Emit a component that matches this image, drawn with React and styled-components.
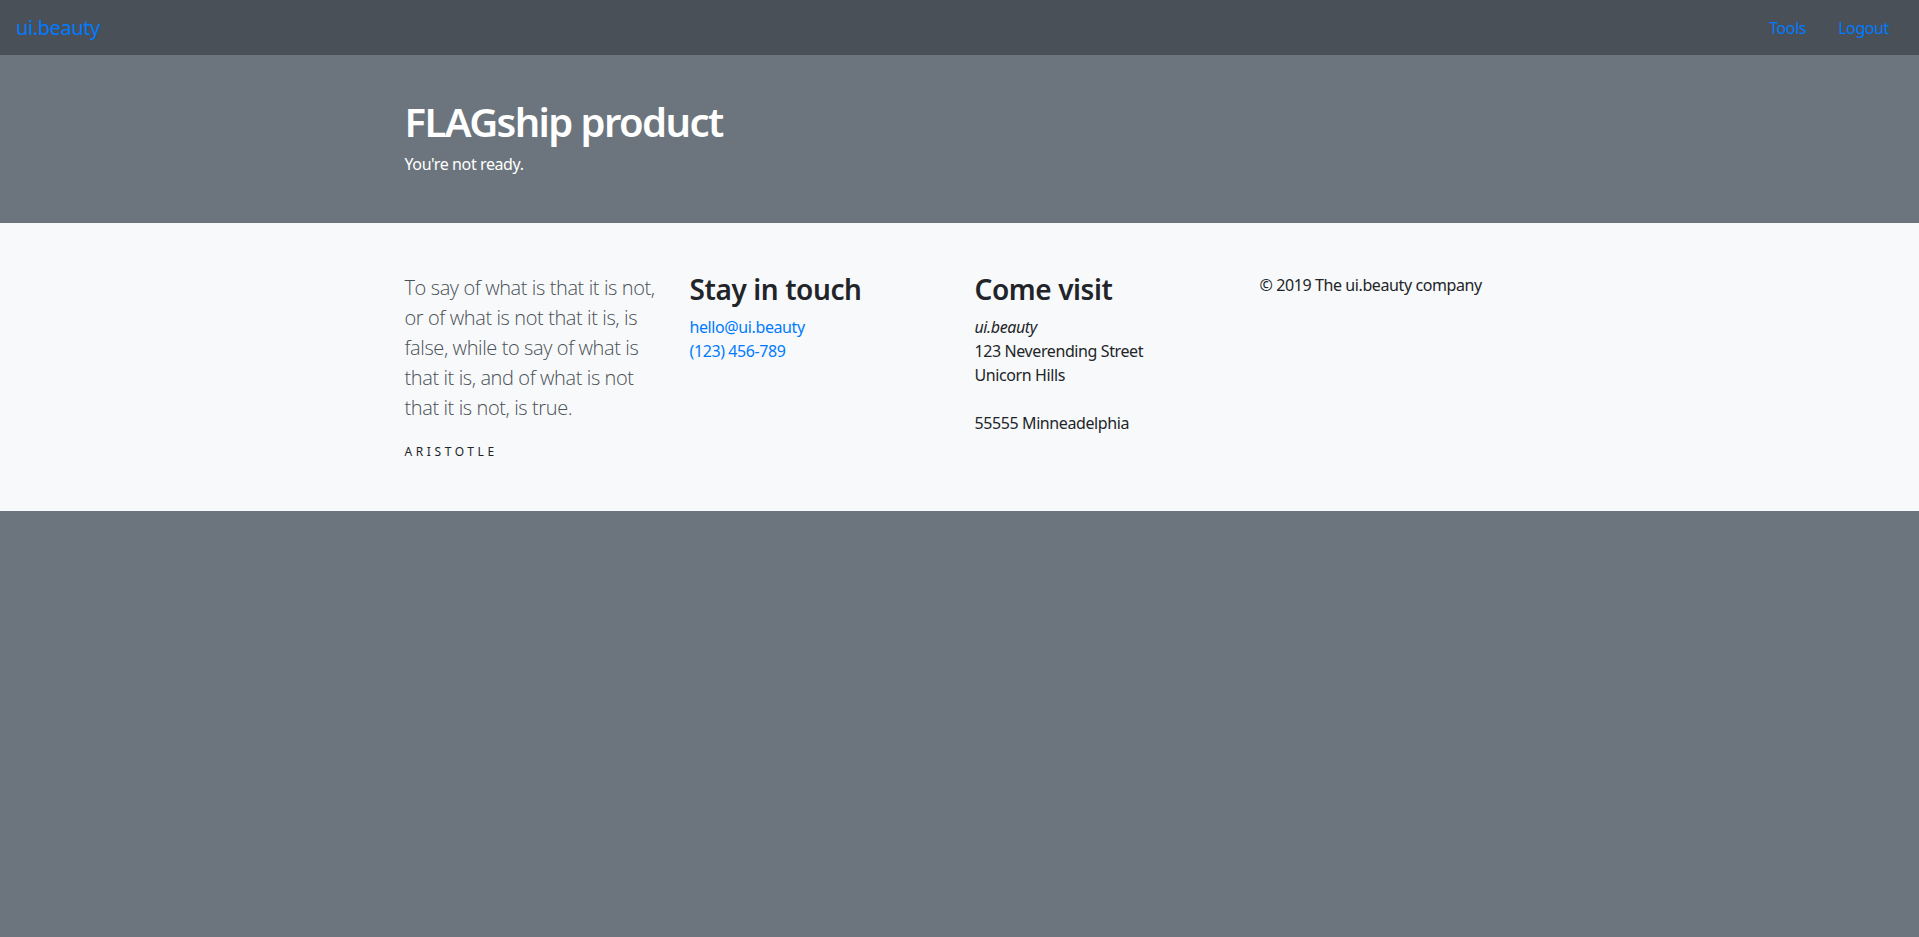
import styled, { createGlobalStyle } from "styled-components";

const GlobalStyle = createGlobalStyle`
  * { box-sizing: border-box; }
  html, body {
    margin: 0;
    padding: 0;
    background-color: #6c757d;
    font-family: "Noto Sans", "Open Sans", "Liberation Sans", sans-serif;
    font-size: 16px;
    line-height: 1.5;
    letter-spacing: -0.025em;
    color: #212529;
  }
`;

export default function App() {
  return (
    <>
      <GlobalStyle />
      <Navbar>
        <Brand href="#">ui.beauty</Brand>
        <NavLinks>
          <NavLink href="#">Tools</NavLink>
          <NavLink href="#">Logout</NavLink>
        </NavLinks>
      </Navbar>
      <Jumbotron>
        <Container>
          <h1>FLAGship product</h1>
          <p>You're not ready.</p>
        </Container>
      </Jumbotron>
      <Footer>
        <Container>
          <Row>
            <Col>
              <Quote>
                To say of what is that it is not, or of what is not that it is,
                is false, while to say of what is that it is, and of what is not
                that it is not, is true.
              </Quote>
              <Author>Aristotle</Author>
            </Col>
            <Col>
              <Heading>Stay in touch</Heading>
              <ContactLink href="#">hello@ui.beauty</ContactLink>
              <ContactLink href="#">(123) 456-789</ContactLink>
            </Col>
            <Col>
              <Heading>Come visit</Heading>
              <Address>
                <em>ui.beauty</em>
                <br />
                123 Neverending Street
                <br />
                Unicorn Hills
                <br />
                <br />
                55555 Minneadelphia
              </Address>
            </Col>
            <Col>
              <Copy>© 2019 The ui.beauty company</Copy>
            </Col>
          </Row>
        </Container>
      </Footer>
    </>
  );
}

const Navbar = styled.nav`
  height: 55px;
  background-color: #495057;
  display: flex;
  align-items: center;
  justify-content: space-between;
  padding: 0 22px 0 16px;
`;

const Brand = styled.a`
  color: #007bff;
  font-size: 20px;
  text-decoration: none;
`;

const NavLinks = styled.div`
  display: flex;
`;

const NavLink = styled.a`
  color: #007bff;
  text-decoration: none;
  padding: 0 8px;
  margin-left: 16px;
`;

const Jumbotron = styled.header`
  background-color: #6c757d;
  color: #fff;
  padding: 43px 0 47px;

  h1 {
    margin: 0 0 6px;
    font-size: 40px;
    font-weight: 600;
    line-height: 1.2;
    letter-spacing: -0.04em;
  }

  p {
    margin: 0;
  }
`;

const Container = styled.div`
  width: 1140px;
  margin: 0 auto;
  padding: 0 15px;
`;

const Footer = styled.footer`
  background-color: #f8f9fa;
  padding: 50px 0 50px;
`;

const Row = styled.div`
  display: grid;
  grid-template-columns: repeat(4, 1fr);
  margin: 0 -15px;
`;

const Col = styled.div`
  padding: 0 15px;
`;

const Quote = styled.p`
  margin: 0 0 20px;
  font-family: "Open Sans", "Noto Sans", sans-serif;
  font-size: 20px;
  font-weight: 300;
  line-height: 1.5;
  color: #495057;
`;

const Author = styled.div`
  font-size: 12px;
  letter-spacing: 0.3em;
  text-transform: uppercase;
  color: #212529;
`;

const Heading = styled.h3`
  margin: 0 0 8px;
  font-size: 28px;
  font-weight: 600;
  line-height: 1.2;
`;

const ContactLink = styled.a`
  display: block;
  color: #007bff;
  text-decoration: none;
`;

const Address = styled.address`
  margin: 0 0 16px;
  font-style: normal;
`;

const Copy = styled.p`
  margin: 0;
`;
